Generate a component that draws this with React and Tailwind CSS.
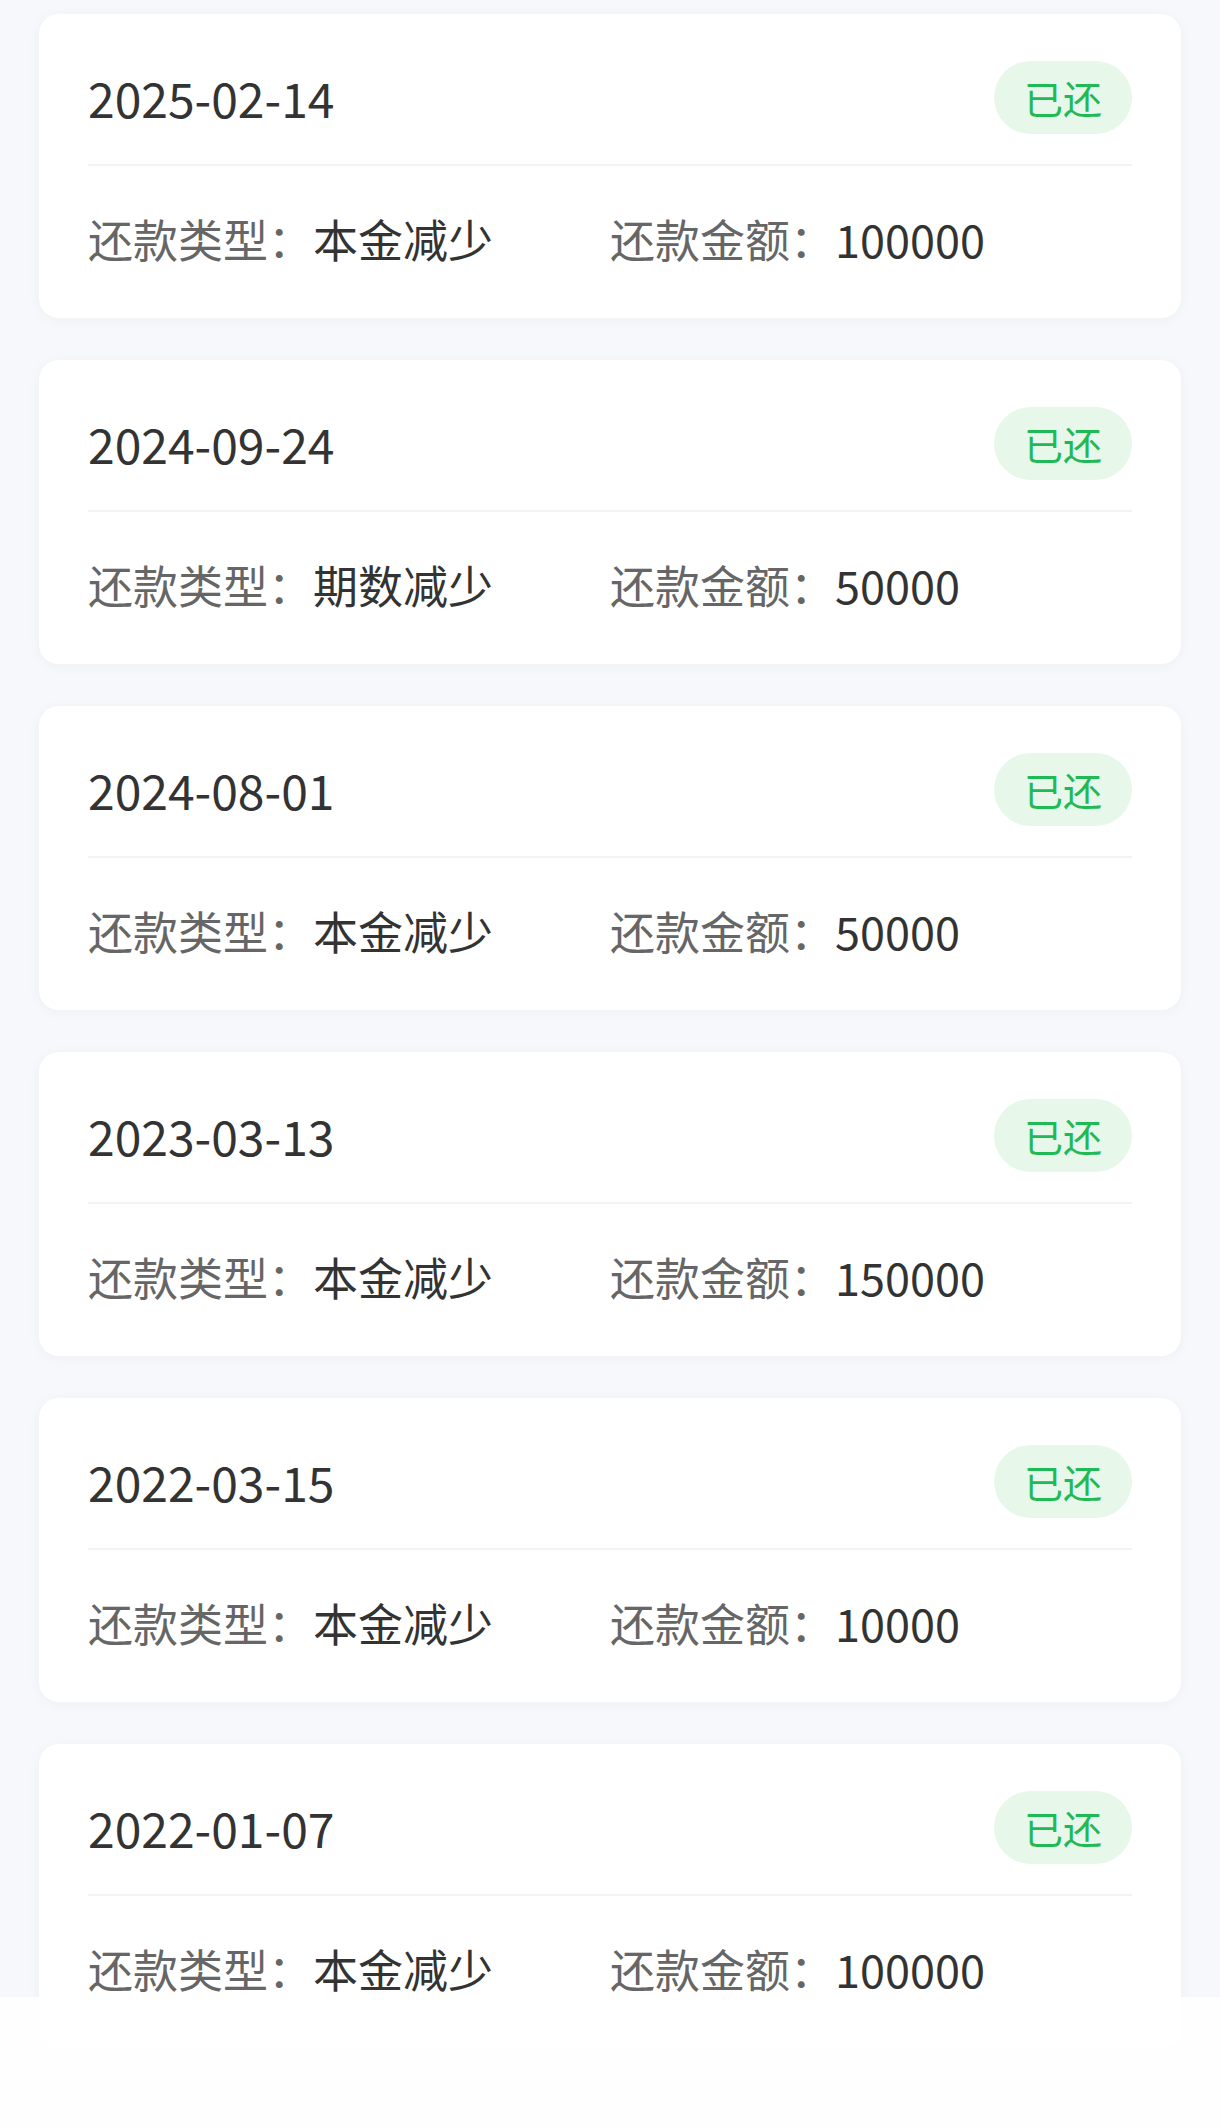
const records = [
  { date: "2025-02-14", type: "本金减少", amount: "100000" },
  { date: "2024-09-24", type: "期数减少", amount: "50000" },
  { date: "2024-08-01", type: "本金减少", amount: "50000" },
  { date: "2023-03-13", type: "本金减少", amount: "150000" },
  { date: "2022-03-15", type: "本金减少", amount: "10000" },
  { date: "2022-01-07", type: "本金减少", amount: "100000" },
]

function RecordCard({ item }) {
  return (
    <div className="mb-[42px] rounded-[20px] bg-white px-[49px] shadow-[0_2px_14px_rgba(30,40,80,0.04)]">
      <div className="flex h-[150px] items-center justify-between pt-[16px]">
        <span className="text-[48px] leading-none text-[#333333]">{item.date}</span>
        <span className="flex h-[73px] w-[138px] items-center justify-center rounded-full bg-[#e7f7ea] text-[39px] leading-none text-[#1fb955]">
          已还
        </span>
      </div>
      <div className="h-[2px] bg-[#f3f3f5]" />
      <div className="grid h-[152px] grid-cols-2 items-center pb-[8px] text-[45px] leading-none">
        <div className="flex">
          <span className="text-[#666666]">还款类型：</span>
          <span className="text-[#333333]">{item.type}</span>
        </div>
        <div className="flex">
          <span className="text-[#666666]">还款金额：</span>
          <span className="text-[#333333]">{item.amount}</span>
        </div>
      </div>
    </div>
  )
}

export default function App() {
  return (
    <div
      className="relative h-[2127px] overflow-hidden bg-[#f7f8fb]"
      style={{ fontFamily: '"Noto Sans CJK SC", "Noto Sans", sans-serif' }}
    >
      <div className="px-[39px] pt-[14px]">
        {records.map((item) => (
          <RecordCard key={item.date} item={item} />
        ))}
      </div>
      {/* bottom bar */}
      <div className="absolute bottom-0 left-0 right-0 h-[130px] bg-white/90" />
    </div>
  )
}
